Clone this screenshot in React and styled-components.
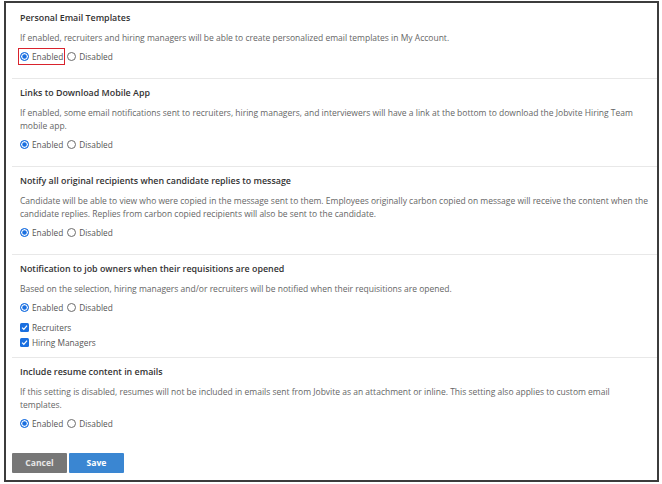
import React from 'react';
import styled, { createGlobalStyle } from 'styled-components';

const GlobalStyle = createGlobalStyle`
  body {
    margin: 0;
    background: #ffffff;
    font-family: "Open Sans", "Noto Sans", sans-serif;
  }
`;

const settings = [
  {
    title: 'Personal Email Templates',
    text: 'If enabled, recruiters and hiring managers will be able to create personalized email templates in My Account.',
    highlight: true,
  },
  {
    title: 'Links to Download Mobile App',
    text: 'If enabled, some email notifications sent to recruiters, hiring managers, and interviewers will have a link at the bottom to download the Jobvite Hiring Team mobile app.',
  },
  {
    title: 'Notify all original recipients when candidate replies to message',
    text: 'Candidate will be able to view who were copied in the message sent to them. Employees originally carbon copied on message will receive the content when the candidate replies. Replies from carbon copied recipients will also be sent to the candidate.',
  },
  {
    title: 'Notification to job owners when their requisitions are opened',
    text: 'Based on the selection, hiring managers and/or recruiters will be notified when their requisitions are opened.',
    checks: ['Recruiters', 'Hiring Managers'],
  },
  {
    title: 'Include resume content in emails',
    text: 'If this setting is disabled, resumes will not be included in emails sent from Jobvite as an attachment or inline. This setting also applies to custom email templates.',
    last: true,
  },
];

const App = () => (
  <>
    <GlobalStyle />
    <Frame>
      {settings.map((s, i) => (
        <Section key={s.title} first={i === 0} last={s.last}>
          <Title>{s.title}</Title>
          <Description>{s.text}</Description>
          <Options>
            <Option highlighted={s.highlight}>
              <Radio checked />
              Enabled
            </Option>
            <Option>
              <Radio />
              Disabled
            </Option>
          </Options>
          {s.checks && (
            <CheckList>
              {s.checks.map((c) => (
                <Option key={c}>
                  <Checkbox>
                    <svg width="7" height="7" viewBox="0 0 10 10">
                      <path d="M1.5 5.2 L4 7.6 L8.6 2.4" fill="none" stroke="#fff" strokeWidth="1.8" />
                    </svg>
                  </Checkbox>
                  {c}
                </Option>
              ))}
            </CheckList>
          )}
        </Section>
      ))}
      <Actions>
        <Button>Cancel</Button>
        <Button primary>Save</Button>
      </Actions>
    </Frame>
  </>
);

export default App;

const Frame = styled.div`
  box-sizing: border-box;
  width: 655px;
  height: 481px;
  margin: 1px 0 0 4px;
  border: 2px solid #3c3c3c;
  border-right-width: 2.5px;
  border-bottom-width: 2.5px;
  padding-left: 6px;
`;

const Section = styled.div`
  padding: ${(p) => (p.first ? '9px' : '8px')} 8px ${(p) => (p.last ? '0' : '8px')} 8px;
  border-bottom: ${(p) => (p.last ? 'none' : '1px solid #e8e8e8')};
`;

const Title = styled.div`
  font-size: 8.9px;
  line-height: 12px;
  font-weight: 600;
  color: #333333;
`;

const Description = styled.div`
  margin-top: 8px;
  font-size: 8.5px;
  line-height: 12.4px;
  color: #666666;
`;

const Options = styled.div`
  display: flex;
  align-items: center;
  gap: 4px;
  margin: 5px 0 7px 0;
  height: 14px;
`;

const Option = styled.label`
  display: flex;
  align-items: center;
  gap: 3px;
  font-size: 8.3px;
  color: #555555;
  outline: ${(p) => (p.highlighted ? '1.5px solid #d9232d' : 'none')};
  outline-offset: 1.5px;
  height: ${(p) => (p.highlighted ? '13px' : '14px')};
`;

const Radio = styled.span`
  box-sizing: border-box;
  width: 9px;
  height: 9px;
  border-radius: 50%;
  border: 1px solid ${(p) => (p.checked ? '#1a6fe0' : '#6b6b6b')};
  background: ${(p) => (p.checked ? '#1a6fe0' : '#ffffff')};
  box-shadow: ${(p) => (p.checked ? 'inset 0 0 0 1.2px #ffffff' : 'none')};
`;

const CheckList = styled.div`
  display: flex;
  flex-direction: column;
  gap: 1px;
  margin-top: -1px;
`;

const Checkbox = styled.span`
  box-sizing: border-box;
  display: flex;
  align-items: center;
  justify-content: center;
  width: 9px;
  height: 9px;
  border-radius: 1.5px;
  background: #1a6fe0;
`;

const Actions = styled.div`
  display: flex;
  gap: 2px;
  margin: 23px 0 0 0;
`;

const Button = styled.button`
  width: 55px;
  height: 20px;
  border: none;
  border-radius: 1px;
  font-family: "Open Sans", "Noto Sans", sans-serif;
  font-size: 8.6px;
  font-weight: 700;
  color: ${(p) => (p.primary ? '#ffffff' : '#e6e6e6')};
  background: ${(p) => (p.primary ? '#3a86d2' : '#777777')};
  padding: 0;
`;
